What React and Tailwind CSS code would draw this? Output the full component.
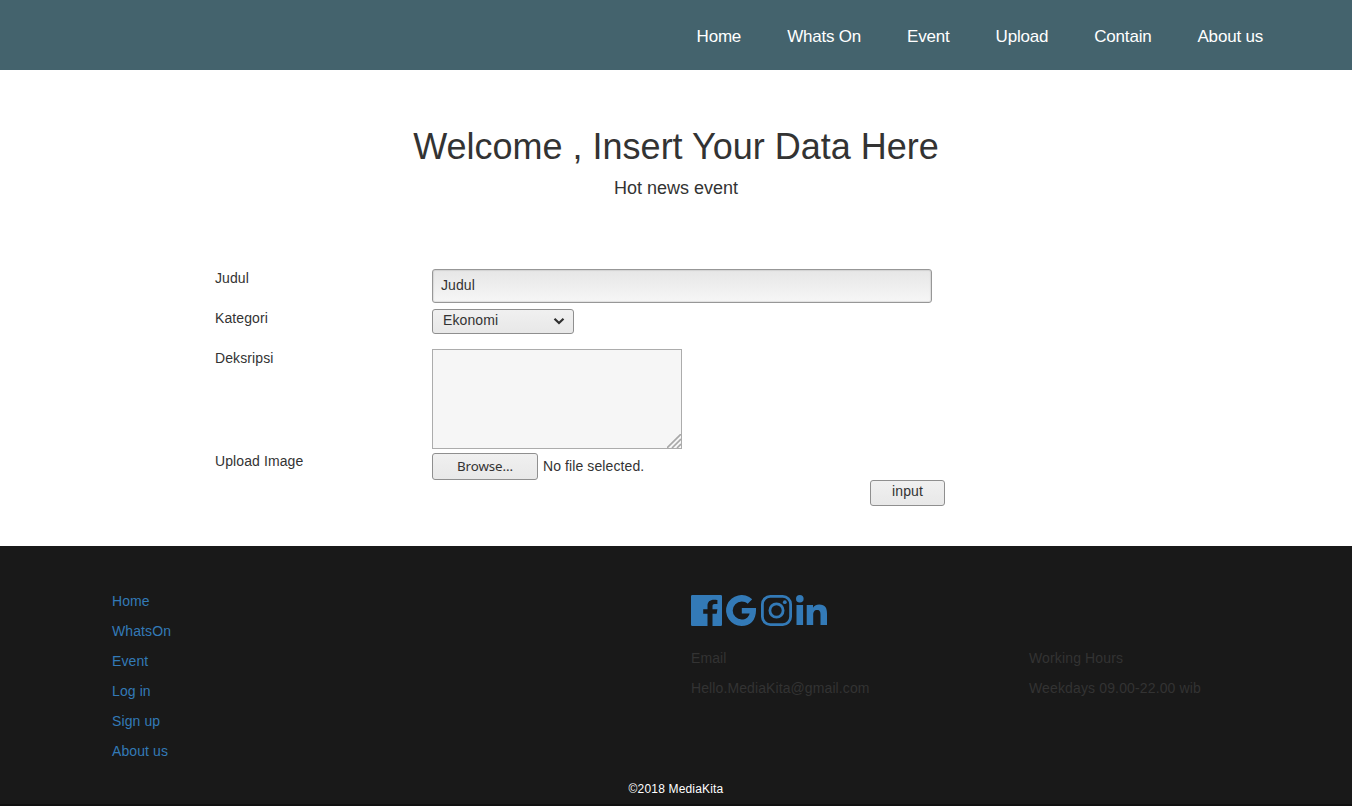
import React from "react";

const navLinks = ["Home", "Whats On", "Event", "Upload", "Contain", "About us"];
const footerLinks = ["Home", "WhatsOn", "Event", "Log in", "Sign up", "About us"];

function Header() {
  return (
    <header className="h-[70px] bg-[#44636d] pr-[89px]">
      <nav className="flex justify-end gap-[46px] pt-[25px] text-[17px] leading-6 tracking-[-0.2px] text-white">
        {navLinks.map((label) => (
          <a key={label} href="#" className="whitespace-nowrap">{label}</a>
        ))}
      </nav>
    </header>
  );
}

function Row({ label, className, children }) {
  return (
    <div className={"flex " + className}>
      <label className="w-[217px] shrink-0 leading-5">{label}</label>
      {children}
    </div>
  );
}

function UploadForm() {
  return (
    <form className="ml-[215px] mt-[70px] w-[730px] text-sm leading-5 tracking-[0.1px]">
      <Row label="Judul" className="h-10">
        <div className="mt-px flex h-[34px] w-[500px] items-start rounded-[3px] border border-[#979797] bg-linear-to-b from-[#e6e6e6] to-[#f6f6f6] pl-2 pt-[5px] shadow-[inset_0_0_1px_1px_rgba(0,0,0,0.09)]">
          Judul
        </div>
      </Row>
      <Row label="Kategori" className="h-10">
        <div className="mt-px flex h-[25px] w-[142px] items-start justify-between rounded-[3px] border border-[#8f8f8f] bg-linear-to-b from-[#f0f0f0] to-[#e8e8e8] pl-[10px] pr-2">
          <span>Ekonomi</span>
          <svg className="mt-[7px] h-2 w-3" viewBox="0 0 12 8" fill="none" stroke="#303030" strokeWidth="2.2">
            <path d="M1.5 1.8 6 6.1l4.5-4.3" />
          </svg>
        </div>
      </Row>
      <Row label="Deksripsi" className="h-[103px]">
        <div className="mt-px flex h-[100px] w-[250px] items-end justify-end border border-[#acacac] bg-[#f6f6f6]">
          <svg className="h-[14px] w-[14px]" viewBox="0 0 14 14" stroke="#a8a8a8" strokeWidth="1.6">
            <path d="M0 14 14 0M5 14l9-9M10 14l4-4" />
          </svg>
        </div>
      </Row>
      <Row label="Upload Image" className="h-[29px]">
        <div className="mt-[2px] flex h-[27px] w-[106px] items-center justify-center rounded-[3px] border border-[#8f8f8f] bg-linear-to-b from-[#f0f0f0] to-[#e8e8e8] pb-[2px] font-['Noto_Sans',sans-serif] text-[13.333px] tracking-[-0.1px]">
          Browse...
        </div>
        <span className="ml-[5px] mt-[5px]">No file selected.</span>
      </Row>
      <div className="flex justify-end">
        <button type="button" className="flex h-[26px] w-[75px] items-start justify-center rounded-[3px] border border-[#8f8f8f] bg-linear-to-b from-[#f0f0f0] to-[#e8e8e8]">
          input
        </button>
      </div>
    </form>
  );
}

function SocialIcons() {
  return (
    <div className="flex h-[31px] gap-1 text-[#337ab7]">
      <svg className="h-[31px] w-[31px]" viewBox="0 0 31 31" fill="currentColor">
        <path d="M1.3 0h28.4A1.3 1.3 0 0 1 31 1.3v28.4a1.3 1.3 0 0 1-1.3 1.3h-8.2V18.8h4.2l.7-4.6h-4.9v-3.1c0-1.4.6-2.1 2.2-2.1h2.7V4.9c-.7-.1-2-.2-3.4-.2-4.2 0-6.5 2.2-6.5 6.1v3.4h-4.3v4.6h4.3V31H1.3A1.3 1.3 0 0 1 0 29.7V1.3A1.3 1.3 0 0 1 1.3 0Z" />
      </svg>
      <svg className="h-[31px] w-[31px]" viewBox="0 0 31 31" fill="currentColor">
        <path d="M15.8 12.9v5.5h7.8c-1 3.9-4 6.1-7.9 6.1a9 9 0 1 1 0-18c2.3 0 4.4.8 6 2.2l4.5-4.5A15.5 15.5 0 1 0 15.7 31C24.5 31 30.7 24.9 30 12.9Z" />
      </svg>
      <svg className="h-[31px] w-[31px]" viewBox="0 0 31 31" fill="none" stroke="currentColor" strokeWidth="2.8">
        <rect x="1.4" y="1.4" width="28.2" height="28.2" rx="7.8" />
        <circle cx="15.5" cy="15.5" r="6.6" />
        <circle cx="23.8" cy="7.2" r="1.9" fill="currentColor" stroke="none" />
      </svg>
      <svg className="h-[31px] w-[31px]" viewBox="0 0 31 31" fill="currentColor">
        <circle cx="3.8" cy="3.8" r="3.8" />
        <path d="M.5 10h6.6v20H.5ZM10.7 10H17v2.8c.9-1.8 3.1-3.3 6.2-3.3 6.2 0 7.8 3.7 7.8 9.2V30h-6.5V20.1c0-3-.5-5-3.4-5s-3.9 2.1-3.9 5V30h-6.5Z" />
      </svg>
    </div>
  );
}

function Footer() {
  return (
    <footer className="mt-10 h-[260px] border-b-2 border-[#101010] bg-[#191919] text-sm leading-5 tracking-[0.1px]">
      <div className="flex h-[232px] pl-[112px] pt-[45px]">
        <ul className="flex w-[579px] flex-col gap-[10px] text-[#337ab7]">
          {footerLinks.map((label) => (
            <li key={label}><a href="#">{label}</a></li>
          ))}
        </ul>
        <div className="pt-1 text-[#333333]">
          <SocialIcons />
          <div className="mt-[22px] flex">
            <div className="flex w-[338px] flex-col gap-[10px]">
              <p>Email</p>
              <p>Hello.MediaKita@gmail.com</p>
            </div>
            <div className="flex flex-col gap-[10px] tracking-[0.14px]">
              <p>Working Hours</p>
              <p>Weekdays 09.00-22.00 wib</p>
            </div>
          </div>
        </div>
      </div>
      <p className="pt-px text-center text-xs leading-5 tracking-[0.17px] text-white">©2018 MediaKita</p>
    </footer>
  );
}

export default function App() {
  return (
    <div className="h-[806px] overflow-hidden bg-white font-['Liberation_Sans',Arial,sans-serif] text-[#333333]">
      <Header />
      <main>
        <div className="pt-[57px] text-center">
          <h1 className="text-4xl leading-10">Welcome , Insert Your Data Here</h1>
          <p className="mt-[11px] text-lg leading-5">Hot news event</p>
        </div>
        <UploadForm />
      </main>
      <Footer />
    </div>
  );
}
